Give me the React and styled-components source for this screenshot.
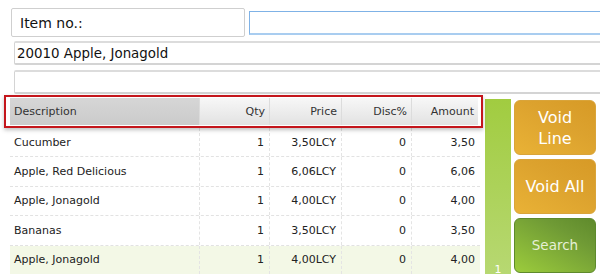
import React from 'react'
import styled, { createGlobalStyle } from 'styled-components';

const GlobalStyle = createGlobalStyle`
  html, body {
    margin: 0;
    padding: 0;
    background: #fff;
  }
  body {
    font-family: "DejaVu Sans", Verdana, sans-serif;
  }
`;

const lines = [
  { name: 'Cucumber', qty: 1, price: '3,50LCY', disc: 0, amount: '3,50' },
  { name: 'Apple, Red Delicious', qty: 1, price: '6,06LCY', disc: 0, amount: '6,06' },
  { name: 'Apple, Jonagold', qty: 1, price: '4,00LCY', disc: 0, amount: '4,00' },
  { name: 'Bananas', qty: 1, price: '3,50LCY', disc: 0, amount: '3,50' },
  { name: 'Apple, Jonagold', qty: 1, price: '4,00LCY', disc: 0, amount: '4,00', selected: true },
];

const App = () => {
  return (
    <Page>
      <GlobalStyle />
      <TopRow>
        <Label>Item no.:</Label>
        <Input />
      </TopRow>
      <InfoLine>20010 Apple, Jonagold</InfoLine>
      <InfoLine $gap={5} />
      <Body>
        <Grid>
          <HeaderFrame>
            <Header>
              <HeadCell $first>Description</HeadCell>
              <HeadCell>Qty</HeadCell>
              <HeadCell>Price</HeadCell>
              <HeadCell>Disc%</HeadCell>
              <HeadCell>Amount</HeadCell>
            </Header>
          </HeaderFrame>
          {lines.map((l, i) => (
            <Row key={i} $selected={l.selected}>
              <Cell $first>{l.name}</Cell>
              <Cell>{l.qty}</Cell>
              <Cell>{l.price}</Cell>
              <Cell>{l.disc}</Cell>
              <Cell>{l.amount}</Cell>
            </Row>
          ))}
        </Grid>
        <Scroller>
          <span>1</span>
        </Scroller>
        <Buttons>
          <ActionButton $tone="orange">Void<br />Line</ActionButton>
          <ActionButton $tone="orange">Void All</ActionButton>
          <ActionButton $tone="green">Search</ActionButton>
        </Buttons>
      </Body>
    </Page>
  )
};

const Page = styled.div`
  width: 600px;
  height: 274px;
  overflow: hidden;
  padding-top: 8px;
  box-sizing: border-box;
`;

const TopRow = styled.div`
  display: flex;
  align-items: flex-start;
  padding-left: 11px;
  gap: 4px;
`;

const Label = styled.div`
  width: 234px;
  height: 29px;
  box-sizing: border-box;
  border: 1px solid #cfcfcf;
  border-radius: 2px;
  padding-left: 8px;
  display: flex;
  align-items: center;
  font-family: Tahoma, "DejaVu Sans", sans-serif;
  font-size: 14px;
  color: #111;
  flex-shrink: 0;
`;

const Input = styled.div`
  margin-top: 3px;
  width: 400px;
  flex-shrink: 0;
  height: 24px;
  box-sizing: border-box;
  border: 1px solid #7fb2e6;
  border-bottom-width: 2px;
  border-bottom-color: #a9cdf0;
  background: #fff;
`;

const InfoLine = styled.div`
  margin-left: 14px;
  margin-top: ${({ $gap }) => $gap ?? 4}px;
  width: 620px;
  height: 24px;
  box-sizing: border-box;
  border: 1px solid #d4d4d4;
  border-top-width: 2px;
  border-bottom-width: 2px;
  border-top-color: #dcdcdc;
  border-radius: 2px;
  padding-left: 2px;
  display: flex;
  align-items: center;
  font-size: 13.4px;
  color: #111;
`;

const Body = styled.div`
  display: flex;
  align-items: flex-start;
  margin-top: 1px;
`;

const Grid = styled.div`
  width: 483px;
  box-sizing: border-box;
  padding-left: 4px;
  flex-shrink: 0;
`;

const HeaderFrame = styled.div`
  width: 479px;
  height: 33px;
  box-sizing: border-box;
  border: 2px solid #c4161c;
  padding: 1px 3px 1px 4px;
  box-shadow: 0 2px 4px rgba(0, 0, 0, 0.25);
  background: #fff;
  position: relative;
  z-index: 1;
`;

const columns = '190px 70px 72px 70px 1fr';

const Header = styled.div`
  display: grid;
  grid-template-columns: ${columns};
  height: 100%;
  background: linear-gradient(#f7f7f7, #e2e2e2);
`;

const HeadCell = styled.div`
  display: flex;
  align-items: center;
  justify-content: ${({ $first }) => ($first ? 'flex-start' : 'flex-end')};
  padding: 0 ${({ $first }) => ($first ? '0 0 4px' : '4px 0 0')};
  font-size: 11px;
  color: #333;
  border-right: 1px solid #dcdcdc;
  background: ${({ $first }) => ($first ? 'linear-gradient(#d6d6d6, #cbcbcb)' : 'transparent')};
  &:last-child {
    border-right: none;
  }
`;

const Row = styled.div`
  display: grid;
  grid-template-columns: ${columns};
  margin-left: 6px;
  width: 470px;
  height: 29.4px;
  box-sizing: border-box;
  border-bottom: 1px dashed #e2e2e2;
  background: ${({ $selected }) => ($selected ? '#f3f8e6' : '#fff')};
`;

const Cell = styled.div`
  display: flex;
  align-items: center;
  justify-content: ${({ $first }) => ($first ? 'flex-start' : 'flex-end')};
  padding: ${({ $first }) => ($first ? '0 0 0 4px' : '0 5px 0 0')};
  font-size: 11px;
  color: #222;
  border-right: 1px dashed #e4e4e4;
  &:last-child {
    border-right: none;
  }
`;

const Scroller = styled.div`
  width: 26px;
  height: 175px;
  margin-top: 4px;
  margin-left: 2px;
  flex-shrink: 0;
  background: linear-gradient(#a1cc40, #b7d872);
  display: flex;
  align-items: flex-end;
  justify-content: center;
  span {
    font-size: 11px;
    line-height: 13px;
    color: #fff;
    margin-bottom: -2px;
  }
`;

const Buttons = styled.div`
  display: flex;
  flex-direction: column;
  gap: 4px;
  margin-left: 3px;
  margin-top: 5px;
`;

const ActionButton = styled.div`
  width: 82px;
  height: 55px;
  box-sizing: border-box;
  border-radius: 6px;
  display: flex;
  align-items: center;
  justify-content: center;
  text-align: center;
  line-height: 21px;
  color: ${({ $tone }) => ($tone === 'green' ? '#e6f0d6' : '#fff')};
  font-size: ${({ $tone }) => ($tone === 'green' ? '13.5px' : '16px')};
  border: 1px solid ${({ $tone }) => ($tone === 'green' ? '#5e8a2c' : '#d9a43a')};
  background: ${({ $tone }) =>
    $tone === 'green'
      ? 'linear-gradient(30deg, #9ccc3c, #6f9a35 70%, #5f8a2c)'
      : 'linear-gradient(30deg, #e9b236, #dca22e 60%, #d79a26)'};
`;

export default App
